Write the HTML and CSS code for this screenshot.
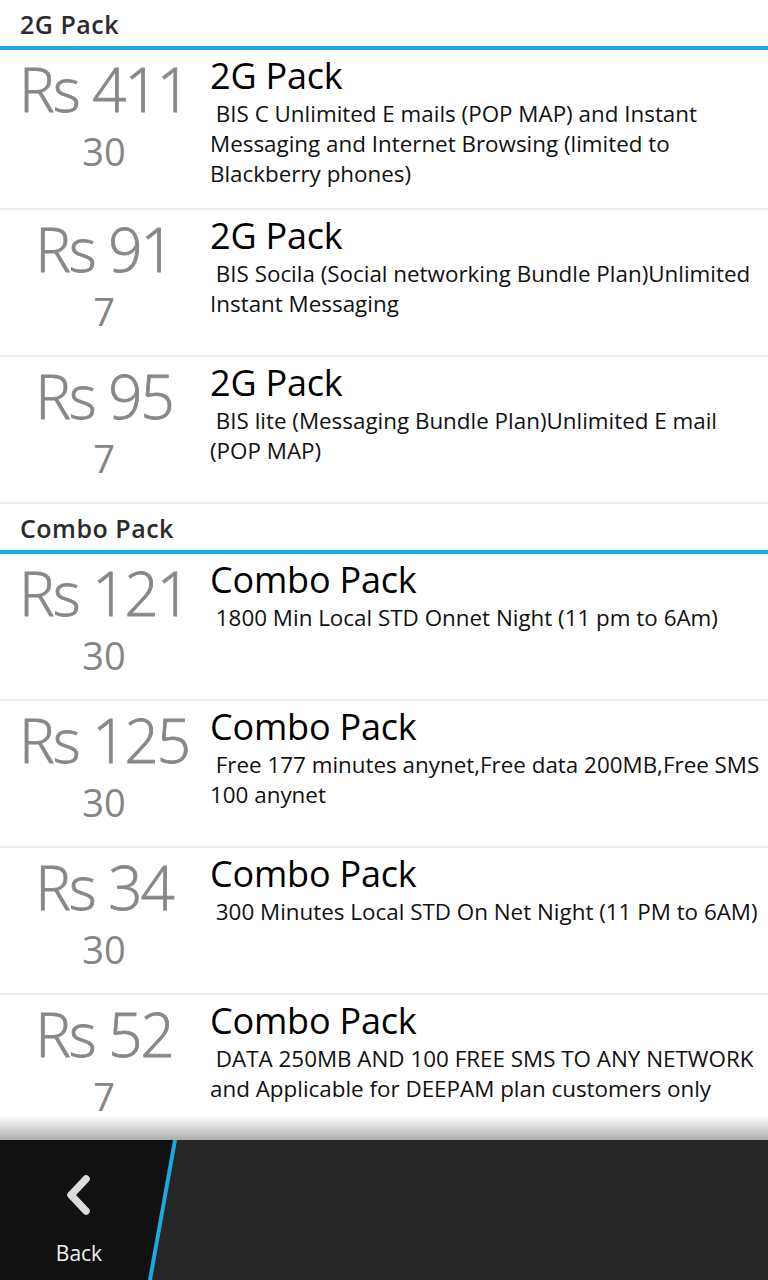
FILE: index.html
```html
<!DOCTYPE html>
<html>
<head>
<meta charset="utf-8">
<link rel="stylesheet" href="styles.css">
</head>
<body>
<div class="screen">
  <div class="list">
    <div class="section-header">2G Pack</div>
    <div class="item">
      <div class="price"><div class="amount">Rs 411</div><div class="days">30</div></div>
      <div class="info"><div class="title">2G Pack</div><div class="desc">&nbsp;BIS C Unlimited E mails (POP MAP) and Instant Messaging and Internet Browsing (limited to Blackberry phones)</div></div>
    </div>
    <div class="item">
      <div class="price"><div class="amount">Rs 91</div><div class="days">7</div></div>
      <div class="info"><div class="title">2G Pack</div><div class="desc">&nbsp;BIS Socila (Social networking Bundle Plan)Unlimited Instant Messaging</div></div>
    </div>
    <div class="item">
      <div class="price"><div class="amount">Rs 95</div><div class="days">7</div></div>
      <div class="info"><div class="title">2G Pack</div><div class="desc">&nbsp;BIS lite (Messaging Bundle Plan)Unlimited E mail (POP MAP)</div></div>
    </div>
    <div class="section-header">Combo Pack</div>
    <div class="item">
      <div class="price"><div class="amount">Rs 121</div><div class="days">30</div></div>
      <div class="info"><div class="title">Combo Pack</div><div class="desc">&nbsp;1800 Min Local STD Onnet Night (11 pm to 6Am)</div></div>
    </div>
    <div class="item">
      <div class="price"><div class="amount">Rs 125</div><div class="days">30</div></div>
      <div class="info"><div class="title">Combo Pack</div><div class="desc">&nbsp;Free 177 minutes anynet,Free data 200MB,Free SMS 100 anynet</div></div>
    </div>
    <div class="item">
      <div class="price"><div class="amount">Rs 34</div><div class="days">30</div></div>
      <div class="info"><div class="title">Combo Pack</div><div class="desc">&nbsp;300 Minutes Local STD On Net Night (11 PM to 6AM)</div></div>
    </div>
    <div class="item">
      <div class="price"><div class="amount">Rs 52</div><div class="days">7</div></div>
      <div class="info"><div class="title">Combo Pack</div><div class="desc">&nbsp;DATA 250MB AND 100 FREE SMS TO ANY NETWORK and Applicable for DEEPAM plan customers only</div></div>
    </div>
  </div>
  <div class="footer">
    <div class="back-edge">
      <div class="back">
        <svg class="chevron" width="32" height="46" viewBox="0 0 32 46"><path d="M23 7 L8 23 L23 39" fill="none" stroke="#dcdcdc" stroke-width="7.5" stroke-linecap="round" stroke-linejoin="round"/></svg>
        <div class="back-label">Back</div>
      </div>
    </div>
    <div class="footer-rest"></div>
  </div>
</div>
</body>
</html>
```

FILE: styles.css
```css
* { box-sizing: border-box; }
html, body { margin: 0; padding: 0; }
body {
  font-family: "Open Sans", "DejaVu Sans", sans-serif;
  background: #fff;
  color: #000;
}
.screen {
  width: 768px;
  height: 1280px;
  display: flex;
  flex-direction: column;
  overflow: hidden;
}
.list {
  flex: 1;
  overflow: hidden;
}
.section-header {
  height: 50px;
  padding: 6px 0 0 20px;
  font-size: 25px;
  font-weight: 600;
  line-height: 36px;
  color: #2b2b2b;
  border-bottom: 4px solid #1ba9e1;
  letter-spacing: 0.5px;
}
.item {
  display: flex;
  border-bottom: 2px solid #ececec;
  min-height: 147px;
}
.price {
  width: 208px;
  flex: none;
  display: flex;
  flex-direction: column;
  align-items: center;
  padding: 6px 0 0 0;
  color: #888;
}
.amount {
  font-size: 60px;
  line-height: 66px;
  letter-spacing: -2px;
  font-weight: 300;
  -webkit-text-stroke: 0.8px #888;
}
.days {
  font-size: 38px;
  line-height: 46px;
  margin-top: 6px;
  font-weight: 400;
  color: #858585;
}
.info {
  flex: 1;
  padding: 5px 7px 19px 2px;
}
.title {
  font-size: 36px;
  line-height: 42px;
  letter-spacing: -0.2px;
}
.desc {
  font-size: 22.4px;
  line-height: 30px;
  margin-top: 2px;
  color: #111;
}
.footer {
  height: 140px;
  flex: none;
  display: flex;
  background: #262626;
  position: relative;
}
.footer::before {
  content: "";
  position: absolute;
  left: 0;
  right: 0;
  top: -24px;
  height: 24px;
  background: linear-gradient(rgba(0,0,0,0), rgba(0,0,0,0.32));
}
.back-edge {
  width: 177px;
  flex: none;
  background: #1ba9e1;
  clip-path: polygon(0 0, 177px 0, 152px 100%, 0 100%);
}
.back {
  width: 177px;
  height: 100%;
  background: #111;
  clip-path: polygon(0 0, 173px 0, 148px 100%, 0 100%);
  padding-right: 19px;
  display: flex;
  flex-direction: column;
  align-items: center;
  padding-top: 32px;
}
.chevron {
  display: block;
}
.back-label {
  margin-top: 21px;
  color: #f0f0f0;
  font-size: 21px;
  line-height: 28px;
}
.footer-rest {
  flex: 1;
}
```
